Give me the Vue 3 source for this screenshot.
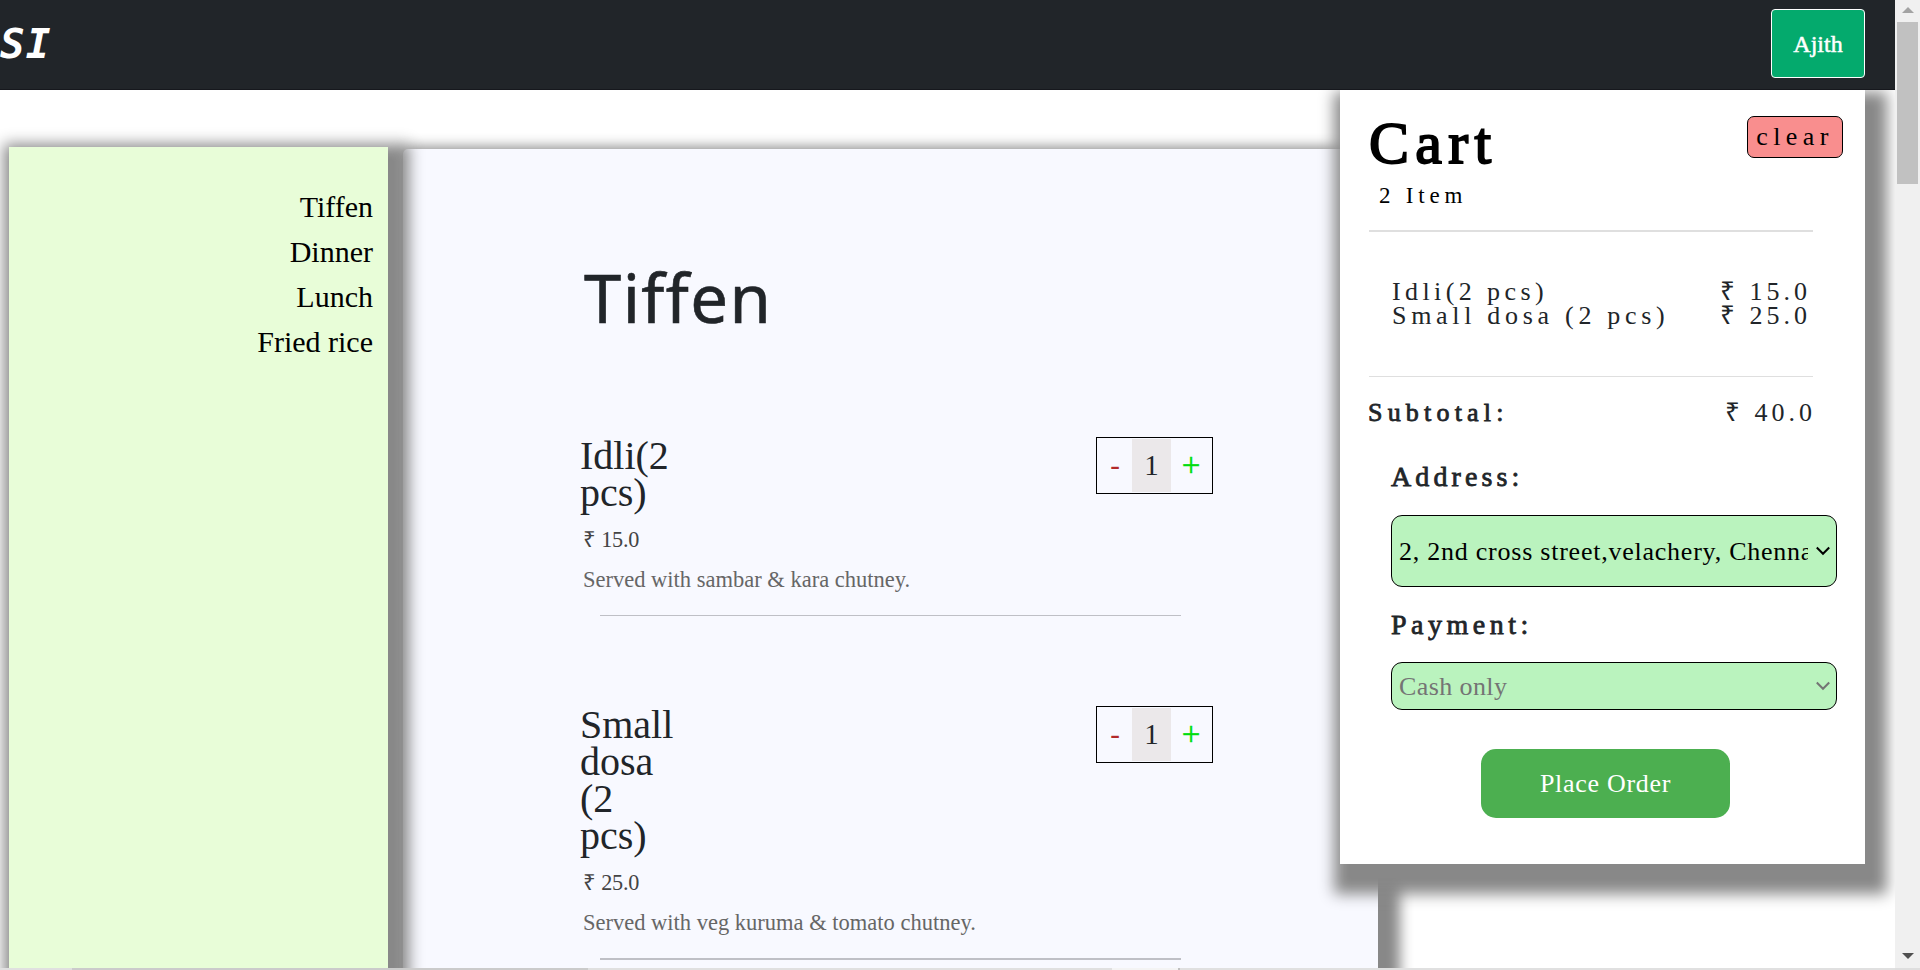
<script setup>
import { ref, computed } from 'vue'

const categories = ['Tiffen', 'Dinner', 'Lunch', 'Fried rice']
const dishes = ref([
  { name: 'Idli(2 pcs)', price: 15, note: 'Served with sambar & kara chutney.', qty: 1 },
  { name: 'Small dosa (2 pcs)', price: 25, note: 'Served with veg kuruma & tomato chutney.', qty: 1 },
])
const inCart = computed(() => dishes.value.filter((d) => d.qty > 0))
const subtotal = computed(() => inCart.value.reduce((sum, d) => sum + d.price * d.qty, 0))
const money = (n) => '₹ ' + n.toFixed(1)
const clearCart = () => dishes.value.forEach((d) => (d.qty = 0))
</script>

<template>
  <div class="window">
    <div class="page">
      <header class="topbar">
        <span class="logo">SI</span>
        <button class="user">Ajith</button>
      </header>

      <div class="columns">
        <nav class="sidebar">
          <a v-for="c in categories" :key="c">{{ c }}</a>
        </nav>

        <main class="menu">
          <h1>Tiffen</h1>
          <section v-for="d in dishes" :key="d.name" class="dish">
            <div class="row">
              <h2>{{ d.name }}</h2>
              <div class="stepper">
                <span class="minus" @click="d.qty--">-</span>
                <span class="qty">{{ d.qty }}</span>
                <span class="plus" @click="d.qty++">+</span>
              </div>
            </div>
            <p class="price">{{ money(d.price) }}</p>
            <p class="note">{{ d.note }}</p>
            <div class="rule"></div>
          </section>
        </main>
      </div>

      <aside class="cart">
        <div class="cart-head">
          <h2>Cart</h2>
          <button class="clear" @click="clearCart">clear</button>
        </div>
        <p class="count">{{ inCart.length }} Item</p>
        <div class="line thick"></div>
        <div class="lines">
          <div v-for="d in inCart" :key="d.name" class="entry">
            <span>{{ d.name }}</span><span class="amount">{{ money(d.price) }}</span>
          </div>
        </div>
        <div class="line"></div>
        <div class="subtotal">
          <b>Subtotal:</b><span class="amount">{{ money(subtotal) }}</span>
        </div>
        <h3 class="address-label">Address:</h3>
        <div class="select tall">
          <span>2, 2nd cross street,velachery, Chennai</span>
          <svg width="16" height="10" viewBox="0 0 16 10"><path d="M1.8 1.5 8 7.8l6.2-6.3" /></svg>
        </div>
        <h3 class="payment-label">Payment:</h3>
        <div class="select disabled">
          <span>Cash only</span>
          <svg width="16" height="10" viewBox="0 0 16 10"><path d="M1.8 1.5 8 7.8l6.2-6.3" /></svg>
        </div>
        <button class="order">Place Order</button>
      </aside>
      <div class="bottom-edge"><i class="a"></i><i class="b"></i><i class="c"></i><i class="d"></i></div>
    </div>

    <div class="scrollbar">
      <svg width="12" height="6" viewBox="0 0 12 6"><path d="M0 6 6 0l6 6z" fill="#a3a3a3" /></svg>
      <div class="thumb"></div>
      <svg class="down" width="12" height="6" viewBox="0 0 12 6"><path d="M0 0h12L6 6z" fill="#505050" /></svg>
    </div>
  </div>
</template>

<style>
body {
  background: #fff;
  overflow: hidden;
}
</style>

<style scoped>
.window,
.window * {
  box-sizing: border-box;
}
.window {
  display: flex;
  width: 1920px;
  height: 970px;
  overflow: hidden;
  font-family: 'Liberation Serif', serif;
  color: #212529;
}
h1, h2, h3, p {
  margin: 0;
  font-weight: 400;
}
button {
  font-family: inherit;
  padding: 0;
}
.page {
  position: relative;
  width: 1895px;
  height: 970px;
  overflow: hidden;
}

.topbar {
  position: relative;
  z-index: 3;
  display: flex;
  justify-content: space-between;
  height: 90px;
  padding: 9px 30px 0 0;
  background: #212529;
  border-bottom: 1px solid #16181d;
}
.logo {
  font: italic bold 41px/70px 'DejaVu Sans Mono', monospace;
  color: #fff;
  letter-spacing: 1px;
}
.user {
  width: 94px;
  height: 69px;
  padding-top: 2px;
  border: 1px solid #fff;
  border-radius: 4px;
  background: #04aa6d;
  color: #fff;
  font-size: 24px;
  -webkit-text-stroke: 0.5px #fff;
}

.columns {
  display: flex;
  align-items: flex-start;
  gap: 15px;
  padding: 57px 0 0 9px;
}
.sidebar {
  position: relative;
  z-index: 1;
  display: flex;
  flex-direction: column;
  width: 379px;
  height: 900px;
  padding: 37px 15px 0 0;
  background: #e8fdd8;
  box-shadow: 8px 10px 14px 13px #888;
  text-align: right;
  font-size: 30px;
  line-height: 45px;
  color: #000;
}
.menu {
  width: 975px;
  height: 900px;
  margin-top: 2px;
  padding: 0 0 0 178px;
  border-radius: 5px;
  background: #f8f9ff;
  box-shadow: 9px 11px 13px 13px #888;
}
h1 {
  height: 288px;
  padding: 106px 0 0 3px;
  font: 400 67px/84px 'Noto Sans', sans-serif;
  letter-spacing: 1.4px;
  -webkit-text-stroke: 0.6px #212529;
}
.dish {
  height: 269px;
}
.row {
  display: flex;
  justify-content: space-between;
  width: 632px;
}
.row h2 {
  width: 97px;
  margin-left: -1px;
  font-size: 40px;
  line-height: 37px;
}
.stepper {
  display: flex;
  flex: none;
  width: 117px;
  height: 57px;
  padding: 1px;
  border: 1px solid #000;
  font-size: 29px;
  line-height: 53px;
  text-align: center;
}
.stepper span {
  width: 34px;
}
.stepper .minus {
  color: #b22a2a;
}
.stepper .qty {
  width: 39px;
  background: #ebe8ea;
}
.stepper .plus {
  width: 40px;
  font-size: 33px;
  color: #00dd0e;
  -webkit-text-stroke: 0.4px #00dd0e;
}
.price {
  padding: 12px 0 0 2px;
  font-size: 22.2px;
  line-height: 34px;
  letter-spacing: -0.2px;
  color: #444;
}
.note {
  padding: 6px 0 0 2px;
  font-size: 22.5px;
  line-height: 34px;
  color: #666;
}
.rule {
  width: 581px;
  height: 1px;
  margin: 18px 0 0 19px;
  background: #bfc0c6;
}
.dish:last-child .rule {
  height: 2px;
}

/* The cart floats over the menu columns. */
.cart {
  position: absolute;
  z-index: 2;
  left: 1340px;
  top: 90px;
  width: 525px;
  height: 774px;
  padding: 0 28px 0 29px;
  background: #fff;
  box-shadow: 8px 16px 14px 14px #888;
  font-size: 26px;
}
.cart-head {
  display: flex;
  justify-content: space-between;
  margin-right: -6px;
  height: 90px;
}
.cart-head h2 {
  padding-top: 23px;
  font-size: 60px;
  line-height: 60px;
  letter-spacing: 6.3px;
  color: #000;
  -webkit-text-stroke: 1.9px #000;
}
.clear {
  width: 96px;
  height: 42px;
  margin-top: 26px;
  border: 1px solid #000;
  border-radius: 7px;
  background: #f98e8e;
  color: #000;
  font-size: 26px;
  letter-spacing: 5.4px;
}
.count {
  height: 50px;
  padding-left: 10px;
  font-size: 23px;
  line-height: 31px;
  letter-spacing: 4.8px;
  color: #000;
}
.line {
  width: 444px;
  height: 1px;
  background: #dfdfdf;
}
.line.thick {
  height: 2px;
}
.lines {
  width: 444px;
  height: 144px;
  padding: 48px 0 0 23px;
  line-height: 24px;
  letter-spacing: 4.7px;
}
.entry {
  display: flex;
  justify-content: space-between;
}
.entry:first-child > span:first-child {
  letter-spacing: 4.4px;
}
.amount {
  margin-right: 2px;
  letter-spacing: 4px;
}
.subtotal {
  display: flex;
  justify-content: space-between;
  width: 449px;
  height: 60px;
  padding-top: 19px;
  line-height: 34px;
}
.subtotal b {
  margin-left: -1px;
  font-weight: 400;
  letter-spacing: 5.2px;
  -webkit-text-stroke: 0.8px #212529;
}
h3 {
  padding-left: 22px;
  font-size: 28px;
  line-height: 34px;
  letter-spacing: 4.1px;
  -webkit-text-stroke: 0.8px #212529;
}
.address-label {
  padding-top: 23px;
  height: 78px;
}
.payment-label {
  padding-top: 21px;
  height: 75px;
  letter-spacing: 4.5px;
}
.select {
  display: flex;
  align-items: center;
  justify-content: space-between;
  width: 446px;
  height: 48px;
  margin-left: 22px;
  padding: 0 5px 0 7px;
  border: 1px solid #000;
  border-radius: 11px;
  background: #baf3be;
  color: #000;
  letter-spacing: 0.76px;
}
.select.tall {
  height: 72px;
}
.select span {
  width: 409px;
  padding-top: 2px;
  overflow: hidden;
  white-space: nowrap;
}
.select path {
  fill: none;
  stroke: #000;
  stroke-width: 2;
}
.select.disabled {
  color: #747474;
  letter-spacing: 0.4px;
}
.select.disabled path {
  stroke: #747474;
}
.order {
  display: block;
  width: 249px;
  height: 69px;
  margin: 39px 0 0 112px;
  border: 0;
  border-radius: 15px;
  background: #4caf50;
  color: #fff;
  font-size: 26px;
  letter-spacing: 0.7px;
}

.bottom-edge {
  position: absolute;
  z-index: 4;
  left: 0;
  right: 0;
  bottom: 0;
  display: flex;
  height: 2px;
  background: #e0e0e0;
}
.bottom-edge .a {
  width: 72px;
}
.bottom-edge .b {
  width: 516px;
  background: #cbcbcb;
}
.bottom-edge .c {
  width: 66px;
  margin-left: 524px;
  background: #f4f4f4;
}
.bottom-edge .d {
  width: 2px;
  background: #c0c0c0;
}

.scrollbar {
  display: flex;
  flex-direction: column;
  align-items: center;
  width: 25px;
  height: 970px;
  padding-top: 7px;
  background: #f0f0f0;
  border-bottom: 2px solid #dedede;
}
.thumb {
  width: 21px;
  height: 162px;
  margin-top: 9px;
  background: #c1c1c1;
}
.down {
  margin-top: auto;
  margin-bottom: 9px;
}
</style>
